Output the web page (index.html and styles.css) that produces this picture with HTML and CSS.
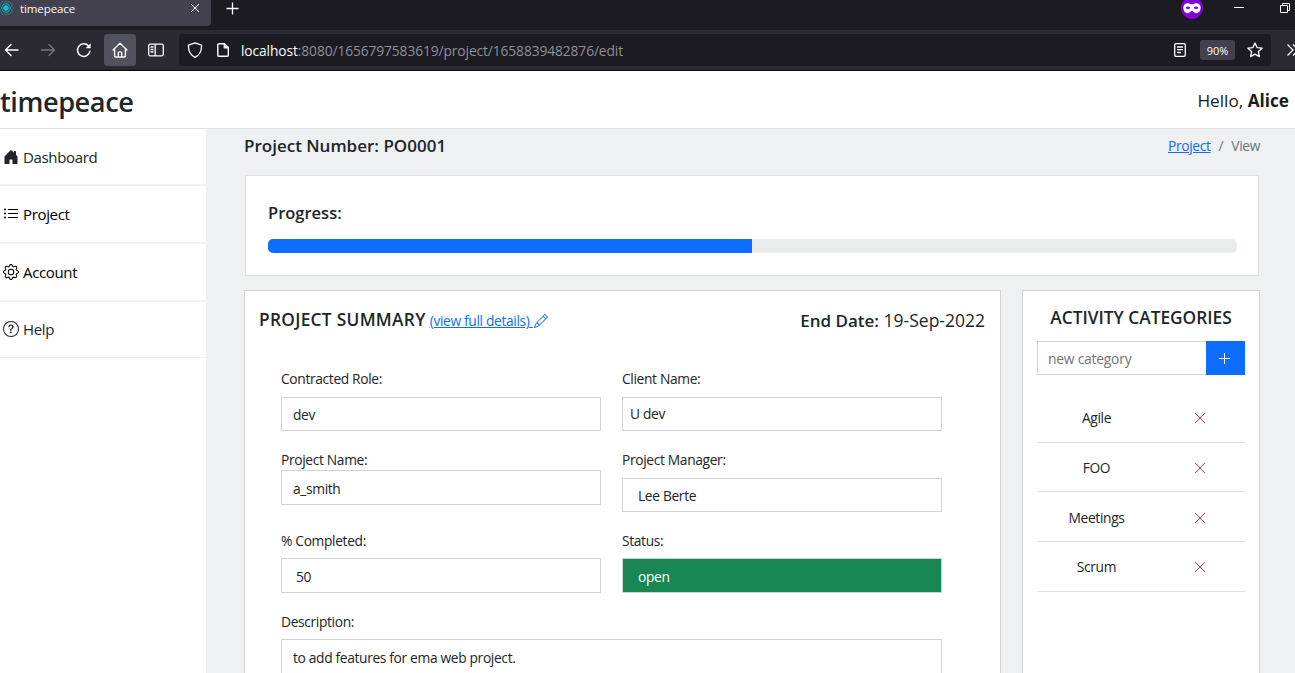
FILE: index.html
```html
<!DOCTYPE html>
<html lang="en">
<head>
<meta charset="utf-8">
<title>timepeace</title>
<link rel="stylesheet" href="styles.css">
</head>
<body>
<div class="browser">
  <div class="tabstrip">
    <div class="tab">
      <svg class="favicon" width="16" height="16" viewBox="0 0 16 16" fill="none" stroke="#1f8896"><path d="M8 .8l1.500 1.300 2-.4.8 1.900 1.900.8-.3 2L15.200 8l-1.300 1.600.3 2-1.900.8-.8 1.900-2-.4L8 15.200l-1.500-1.300-2 .4-.8-1.900-1.900-.8.3-2L.8 8l1.300-1.600-.3-2 1.900-.8.8-1.900 2 .4z" stroke-width=".8"/><circle cx="8" cy="8" r="4.300" fill="#15626e" stroke="#1aa5b4"/><circle cx="8" cy="8" r="2.300" fill="#16b9c8" stroke="#16b9c8"/></svg>
      <span class="tab-title">timepeace</span>
      <svg class="tab-close" width="10" height="10" viewBox="0 0 10 10" stroke="#fbfbfe" stroke-width="1"><path d="M1 1l8 8M9 1l-8 8"/></svg>
    </div>
    <svg class="newtab" width="13" height="13" viewBox="0 0 13 13" stroke="#fbfbfe" stroke-width="1.3"><path d="M6.5 .5v12M.5 6.5h12"/></svg>
    <div class="window-controls">
      <svg width="22" height="22" viewBox="0 0 22 22"><circle cx="11" cy="11" r="11" fill="#8000d7"/><path fill="#fff" fill-rule="evenodd" d="M2.4 10.2C2.4 7.300 4.500 6.200 6.800 6.200c2 0 3 .9 4.200.9s2.200-.9 4.200-.9c2.300 0 4.400 1.100 4.400 4 0 3.800-1.900 6-4.400 6-2.100 0-2.800-2.100-4.200-2.100s-2.100 2.100-4.200 2.100c-2.500 0-4.400-2.200-4.400-6zM4.700 10.700c1.300 1.900 3.300 1.900 4.500.3-1-1.900-3.300-2-4.500-.3zm8.100.3c1.200 1.600 3.200 1.600 4.500-.3-1.200-1.700-3.500-1.600-4.500.3z"/></svg>
      <svg class="minimize" width="10" height="10" viewBox="0 0 10 10"><path d="M0 5.500h10" stroke="#fff"/></svg>
      <svg class="restore" width="10" height="10" viewBox="0 0 10 10" fill="none" stroke="#fff"><path d="M.5 2.500h7v7h-7zM2.500 2.500v-2h7v7h-2"/></svg>
    </div>
  </div>
  <div class="toolbar">
    <svg class="back" width="16" height="16" viewBox="0 0 16 16" fill="none" stroke="#fbfbfe" stroke-width="1.400" stroke-linecap="round" stroke-linejoin="round"><path d="M14 8H2M7 2.500L1.500 8 7 13.500"/></svg>
    <svg class="forward" width="16" height="16" viewBox="0 0 16 16" fill="none" stroke="#77767d" stroke-width="1.300" stroke-linecap="round" stroke-linejoin="round"><path d="M1.500 8h13M9 2.500L14.500 8 9 13.500"/></svg>
    <svg class="reload" width="16" height="16" viewBox="0 0 16 16" fill="none" stroke="#fbfbfe" stroke-width="1.500" stroke-linecap="round"><path d="M14 9.200A6.300 6.300 0 1 1 12.600 4"/><path d="M14.600 1.200v5h-5z" fill="#fbfbfe" stroke="none"/></svg>
    <span class="home"><svg width="16" height="16" viewBox="0 0 16 16" fill="none" stroke="#fbfbfe" stroke-width="1.300" stroke-linecap="round" stroke-linejoin="round"><path d="M1 8l7-6.700L15 8M2.600 7v7c0 .6.400 1 1 1h8.800c.6 0 1-.4 1-1V7M6.300 14.800v-4c0-.6.400-1 1-1h1.400c.6 0 1 .4 1 1v4"/></svg></span>
    <svg class="sidebars" width="16" height="14" viewBox="0 0 16 14" fill="none" stroke="#fbfbfe" stroke-width="1.300"><rect x=".7" y="1.200" width="14.600" height="11.600" rx="1.500"/><path d="M7.200 1v12M2.500 4h3M2.500 6.500h3M2.500 9h3" /></svg>
    <div class="urlbar">
      <svg class="shield" width="16" height="16" viewBox="0 0 16 16" fill="none" stroke="#fbfbfe" stroke-width="1.300" stroke-linejoin="round"><path d="M8 .8l6.500 2.400c.3 5.500-2 10-6.500 12.100C3.500 13.200 1.200 8.700 1.500 3.200z"/></svg>
      <svg class="page" width="12" height="14" viewBox="0 0 12 14" fill="none" stroke="#fbfbfe" stroke-width="1.400" stroke-linejoin="round"><path d="M2 .8h5.500l3.800 3.800v7.600c0 .6-.4 1-1 1H1.800c-.6 0-1-.4-1-1V1.800c0-.6.5-1 1.200-1z"/><path d="M7.300 1v3.800h4z" fill="#fbfbfe"/></svg>
      <span class="url"><b>localhost</b>:8080/1656797583619/project/1658839482876/edit</span>
      <svg class="reader" width="12" height="14" viewBox="0 0 12 14" fill="none" stroke="#fbfbfe" stroke-width="1.300"><rect x=".7" y=".7" width="10.600" height="12.600" rx="1.300"/><path d="M3 4h6M3 6.700h6M3 9.500h4"/></svg>
      <span class="zoom">90%</span>
      <svg class="star" width="16" height="16" viewBox="0 0 16 16" fill="none" stroke="#fbfbfe" stroke-width="1.300" stroke-linejoin="round"><path d="M8 1l2.100 4.600 5 .6-3.700 3.400 1 5L8 12.100l-4.400 2.500 1-5L.9 6.200l5-.6z"/></svg>
    </div>
    <svg class="overflow" width="12" height="12" viewBox="0 0 12 12" fill="none" stroke="#fbfbfe" stroke-width="1.300"><path d="M.5 .5L6 6 .5 11.500M6 .5L11.500 6 6 11.500"/></svg>
  </div>
</div>

<header class="header">
  <h1 class="brand"><span>timepeace</span></h1>
  <div class="greeting">Hello, <b>Alice</b></div>
</header>

<div class="layout">
  <nav class="sidebar">
    <a class="nav-item"><svg class="bi" viewBox="0 0 16 16"><path d="M6.500 14.500v-3.505c0-.245.25-.495.5-.495h2c.25 0 .5.25.5.5v3.500a.5.5 0 0 0 .5.5h4a.5.5 0 0 0 .5-.5v-7a.5.5 0 0 0-.146-.354L13 5.793V2.500a.5.5 0 0 0-.5-.5h-1a.5.5 0 0 0-.5.5v1.293L8.354 1.146a.5.5 0 0 0-.708 0l-6 6A.5.5 0 0 0 1.500 7.500v7a.5.5 0 0 0 .5.5h4a.5.5 0 0 0 .5-.5Z"/></svg><span>Dashboard</span></a>
    <a class="nav-item dark"><svg class="bi" viewBox="0 0 16 16"><path d="M5 11.500a.5.5 0 0 1 .5-.5h9a.5.5 0 0 1 0 1h-9a.5.5 0 0 1-.5-.5zm0-4a.5.5 0 0 1 .5-.5h9a.5.5 0 0 1 0 1h-9a.5.5 0 0 1-.5-.5zm0-4a.5.5 0 0 1 .5-.5h9a.5.5 0 0 1 0 1h-9a.5.5 0 0 1-.5-.5zm-3 1a1 1 0 1 0 0-2 1 1 0 0 0 0 2zm0 4a1 1 0 1 0 0-2 1 1 0 0 0 0 2zm0 4a1 1 0 1 0 0-2 1 1 0 0 0 0 2z"/></svg><span>Project</span></a>
    <a class="nav-item dark"><svg class="bi" viewBox="0 0 16 16"><path d="M8 4.754a3.246 3.246 0 1 0 0 6.492 3.246 3.246 0 0 0 0-6.492zM5.754 8a2.246 2.246 0 1 1 4.492 0 2.246 2.246 0 0 1-4.492 0z"/><path d="M9.796 1.343c-.527-1.790-3.065-1.790-3.592 0l-.094.319a.873.873 0 0 1-1.255.52l-.292-.16c-1.640-.892-3.433.902-2.540 2.541l.159.292a.873.873 0 0 1-.52 1.255l-.319.094c-1.790.527-1.790 3.065 0 3.592l.319.094a.873.873 0 0 1 .52 1.255l-.16.292c-.892 1.640.901 3.434 2.541 2.540l.292-.159a.873.873 0 0 1 1.255.52l.094.319c.527 1.790 3.065 1.790 3.592 0l.094-.319a.873.873 0 0 1 1.255-.52l.292.16c1.640.893 3.434-.902 2.540-2.541l-.159-.292a.873.873 0 0 1 .52-1.255l.319-.094c1.790-.527 1.790-3.065 0-3.592l-.319-.094a.873.873 0 0 1-.52-1.255l.16-.292c.893-1.640-.902-3.433-2.541-2.540l-.292.159a.873.873 0 0 1-1.255-.52l-.094-.319zm-2.633.283c.246-.835 1.428-.835 1.674 0l.094.319a1.873 1.873 0 0 0 2.693 1.115l.291-.16c.764-.415 1.600.42 1.184 1.185l-.159.292a1.873 1.873 0 0 0 1.116 2.692l.318.094c.835.246.835 1.428 0 1.674l-.319.094a1.873 1.873 0 0 0-1.115 2.693l.16.291c.415.764-.42 1.600-1.185 1.184l-.291-.159a1.873 1.873 0 0 0-2.693 1.116l-.094.318c-.246.835-1.428.835-1.674 0l-.094-.319a1.873 1.873 0 0 0-2.692-1.115l-.292.16c-.764.415-1.600-.42-1.184-1.185l.159-.291A1.873 1.873 0 0 0 1.945 8.930l-.319-.094c-.835-.246-.835-1.428 0-1.674l.319-.094A1.873 1.873 0 0 0 3.060 4.377l-.16-.292c-.415-.764.42-1.600 1.185-1.184l.292.159a1.873 1.873 0 0 0 2.692-1.115l.094-.319z"/></svg><span>Account</span></a>
    <a class="nav-item"><svg class="bi" viewBox="0 0 16 16"><path d="M8 15A7 7 0 1 1 8 1a7 7 0 0 1 0 14zm0 1A8 8 0 1 0 8 0a8 8 0 0 0 0 16z"/><path d="M5.255 5.786a.237.237 0 0 0 .241.247h.825c.138 0 .248-.113.266-.25.09-.656.540-1.134 1.342-1.134.686 0 1.314.343 1.314 1.168 0 .635-.374.927-.965 1.371-.673.489-1.206 1.060-1.168 1.987l.003.217a.25.25 0 0 0 .25.246h.811a.25.25 0 0 0 .25-.25v-.105c0-.718.273-.927 1.010-1.486.609-.463 1.244-.977 1.244-2.056 0-1.511-1.276-2.241-2.673-2.241-1.267 0-2.655.590-2.750 2.286zm1.557 5.763c0 .533.425.927 1.010.927.609 0 1.028-.394 1.028-.927 0-.552-.420-.940-1.029-.940-.584 0-1.009.388-1.009.940z"/></svg><span>Help</span></a>
  </nav>

  <main class="main">
    <div class="page-head">
      <h2 class="page-title">Project Number: PO0001</h2>
      <div class="breadcrumb"><a class="link">Project</a><span>/</span><span>View</span></div>
    </div>

    <section class="progress-card">
      <h3>Progress:</h3>
      <div class="progress"><div class="progress-fill" style="width:49.94%"></div></div>
    </section>

    <div class="columns">
      <section class="card summary">
        <div class="summary-head">
          <div class="summary-title"><h3>PROJECT SUMMARY</h3><a class="details">(view full details)&nbsp;<svg class="pencil" viewBox="0 0 16 16"><path d="M12.146.146a.5.5 0 0 1 .708 0l3 3a.5.5 0 0 1 0 .708l-10 10a.5.5 0 0 1-.168.110l-5 2a.5.5 0 0 1-.650-.650l2-5a.5.5 0 0 1 .110-.168l10-10zM11.207 2.500 13.500 4.793 14.793 3.500 12.500 1.207 11.207 2.500zm1.586 3L10.500 3.207 4 9.707V10h.5a.5.5 0 0 1 .5.5v.5h.5a.5.5 0 0 1 .5.5v.5h.293l6.500-6.500zm-9.761 5.175-.106.106-1.528 3.821 3.821-1.528.106-.106A.5.5 0 0 1 5 12.500V12h-.5a.5.5 0 0 1-.5-.5V11h-.5a.5.5 0 0 1-.468-.325z"/></svg></a></div>
          <div class="end-date"><b>End Date:</b> 19-Sep-2022</div>
        </div>
        <div class="form">
          <div class="field"><label>Contracted Role:</label><div class="input">dev</div></div>
          <div class="field"><label>Client Name:</label><div class="input client">U dev</div></div>
          <div class="field tight"><label>Project Name:</label><div class="input">a_smith</div></div>
          <div class="field"><label>Project Manager:</label><div class="input inset">Lee Berte</div></div>
          <div class="field near"><label>% Completed:</label><div class="input tall percent">50</div></div>
          <div class="field near"><label>Status:</label><div class="input tall inset open">open</div></div>
          <div class="field near wide"><label>Description:</label><div class="input area">to add features for ema web project.</div></div>
        </div>
      </section>

      <section class="card categories">
        <h3>ACTIVITY CATEGORIES</h3>
        <div class="add-row"><div class="new-category">new category</div><button class="add" aria-label="Add"><svg width="11" height="11" viewBox="0 0 11 11" stroke="#fff"><path d="M5.500 0v11M0 5.500h11"/></svg></button></div>
        <ul class="list">
          <li><span class="name">Agile</span><svg class="remove" viewBox="0 0 12 12"><path d="M1 1l10 10M11 1L1 11"/></svg></li>
          <li><span class="name">FOO</span><svg class="remove" viewBox="0 0 12 12"><path d="M1 1l10 10M11 1L1 11"/></svg></li>
          <li><span class="name">Meetings</span><svg class="remove" viewBox="0 0 12 12"><path d="M1 1l10 10M11 1L1 11"/></svg></li>
          <li><span class="name">Scrum</span><svg class="remove" viewBox="0 0 12 12"><path d="M1 1l10 10M11 1L1 11"/></svg></li>
        </ul>
      </section>
    </div>
  </main>
</div>
</body>
</html>
```
FILE: styles.css
```css
* { box-sizing: border-box; }
body {
  margin: 0;
  height: 673px;
  overflow: hidden;
  display: flex;
  flex-direction: column;
  font-family: "Open Sans", "Noto Sans", sans-serif;
  font-size: 13.8px;
  letter-spacing: -0.35px;
  line-height: 22px;
  color: #212529;
  background: #fff;
}
h1, h2, h3, ul { margin: 0; padding: 0; font-weight: 600; }
h2, h3 { letter-spacing: 0; }
svg { display: block; flex: none; }
b { font-weight: 600; }

/* Browser chrome */
.browser { flex: none; height: 71px; background: #1c1b22; border-bottom: 1px solid #0c0c0d; color: #fbfbfe; overflow: hidden; letter-spacing: 0; }
.tabstrip { height: 30px; display: flex; align-items: flex-start; }
.tab { width: 211px; height: 26px; background: #42414d; border-radius: 0 0 4px 0; display: flex; align-items: flex-start; font-size: 11.5px; line-height: 18px; letter-spacing: -0.1px; }
.favicon { margin: 0 6px 0 -2px; }
.tab-title { flex: 1; }
.tab-close { margin: 3px 11px 0 0; }
.newtab { margin: 2px 0 0 15px; }
.window-controls { margin-left: auto; display: flex; overflow: hidden; height: 20px; padding-right: 5px; }
.window-controls svg:first-child { margin-top: -3px; }
.minimize { margin: 2px 36px 0 31px; }
.restore { margin-top: 3px; }
.toolbar { height: 40px; background: #2b2a33; display: flex; align-items: center; padding-left: 4px; overflow: hidden; }
.forward { margin-left: 20px; }
.reload { margin-left: 20px; }
.home { width: 32px; height: 32px; margin-left: 12px; background: #52525e; border-radius: 4px; display: flex; align-items: center; justify-content: center; }
.home svg { position: relative; left: -0.5px; }
.sidebars { margin-left: 12px; }
.home, .sidebars { flex: none; }
.urlbar { width: 1092px; height: 32px; margin-left: 15px; background: #1c1b22; border-radius: 4px; display: flex; align-items: center; padding-left: 8px; padding-right: 8px; flex: none; }
.sidebars { margin-left: 12px; }
.page { margin-left: 14px; }
.url { margin-left: 12px; padding-top: 2px; flex: 1; font-size: 13.8px; letter-spacing: -0.11px; color: #8f8f98; white-space: nowrap; }
.url b { font-weight: 400; color: #fbfbfe; }
.zoom { width: 35px; height: 20px; line-height: 21px; margin: 0 12px 0 14px; background: #42414d; border-radius: 3px; text-align: center; font-size: 11px; }
.overflow { margin-left: 16px; }

/* Page header */
.header { flex: none; height: 58px; display: flex; justify-content: space-between; align-items: center; padding-right: 6px; border-bottom: 1px solid #dee2e6; }
.brand { font-size: 27.2px; line-height: 34px; padding-top: 5px; letter-spacing: -0.45px; }
.greeting { font-size: 17.2px; letter-spacing: 0; padding-top: 2px; color: #1a1d20; }
.greeting b { font-weight: 700; }

.layout { flex: 1; min-height: 0; display: flex; }
.sidebar { width: 206px; flex: none; }
.nav-item { display: flex; align-items: center; height: 58px; padding-left: 3px; border-bottom: 2px solid #eff0f2; font-size: 15px; }
.nav-item:first-child { height: 57px; }
.nav-item:last-child { height: 56px; border-bottom-width: 1px; padding-bottom: 1px; }
.nav-item.dark { color: #000; }
.bi { width: 16px; height: 16px; margin-right: 4px; fill: currentColor; }

.main { flex: 1; background: #eff0f2; padding: 5px 35px 0 38px; display: flex; flex-direction: column; }
.page-head { display: flex; justify-content: space-between; height: 41px; line-height: 23px; flex: none; }
.page-title { font-size: 17px; }
.breadcrumb { display: flex; gap: 8px; color: #6c757d; }
.link { color: #0d6efd; text-decoration: underline; }

.progress-card { flex: none; height: 101px; margin: 0 1px; padding: 26px 21px 0 22px; background: #fff; border: 1px solid #dee2e6; }
.progress-card h3 { font-size: 16.5px; line-height: 22px; }
.progress { height: 14px; margin-top: 15px; border-radius: 5px; overflow: hidden; background: #e9ecef; }
.progress-fill { height: 100%; background: #0d6efd; }

.columns { display: flex; gap: 21px; margin-top: 14px; flex: 1; min-height: 0; }
.card { background: #fff; border: 1px solid #d0d1d3; border-bottom: 0; }
.summary { width: 757px; padding: 17px 15px 0; }
.summary-head { display: flex; justify-content: space-between; height: 60px; line-height: 24px; }
.summary-title { display: flex; gap: 4px; }
.summary h3 { font-size: 17.3px; letter-spacing: 0.3px; margin-left: -1px; }
.details { display: flex; height: 20px; line-height: 26px; color: #0d6efd; text-decoration: underline; }
.pencil { width: 14px; height: 14px; margin: 6px 0 0 1px; fill: currentColor; }
.end-date { font-size: 17.5px; letter-spacing: 0; }
.end-date b { font-size: 17px; }

.form { display: grid; grid-template-columns: 320px 320px; column-gap: 21px; grid-template-rows: 81px 81px 81px 62px; padding-left: 21px; }
.field label { display: block; height: 29px; }
.input { height: 34px; line-height: 33px; padding-left: 11px; border: 1px solid #ced4da; background: #fff; }
.near label { height: 28px; }
.tall { height: 35px; line-height: 35px; }
.tight label { height: 21px; }
.tight .input { height: 35px; line-height: 35px; }
.client { padding-left: 7px; line-height: 31px; }
.inset { padding-left: 15px; }
.percent { padding-left: 14px; }
.open { background: #198754; color: #fff; }
.wide { grid-column: span 2; }
.area { border-bottom: 0; line-height: 35px; }

.categories { width: 238px; padding: 15px 14px 0; }
.categories h3 { font-size: 17.3px; line-height: 23px; height: 35px; text-align: center; white-space: nowrap; }
.add-row { display: flex; height: 34px; }
.new-category { flex: 1; border: 1px solid #ced4da; border-right: 0; padding-left: 10px; line-height: 34px; color: #6c757d; letter-spacing: -0.2px; }
.add { width: 39px; padding: 0 2px 0 0; border: 0; background: #0d6efd; display: flex; align-items: center; justify-content: center; }
.list { list-style: none; font-weight: 400; padding-top: 18px; }
.list li { display: flex; align-items: center; height: 49.7px; padding-top: 2px; border-bottom: 1px solid #dee2e6; }
.name { width: 119px; text-align: center; }
.remove { width: 12px; height: 12px; margin-left: 38px; stroke: #dc3545; fill: none; }
```
